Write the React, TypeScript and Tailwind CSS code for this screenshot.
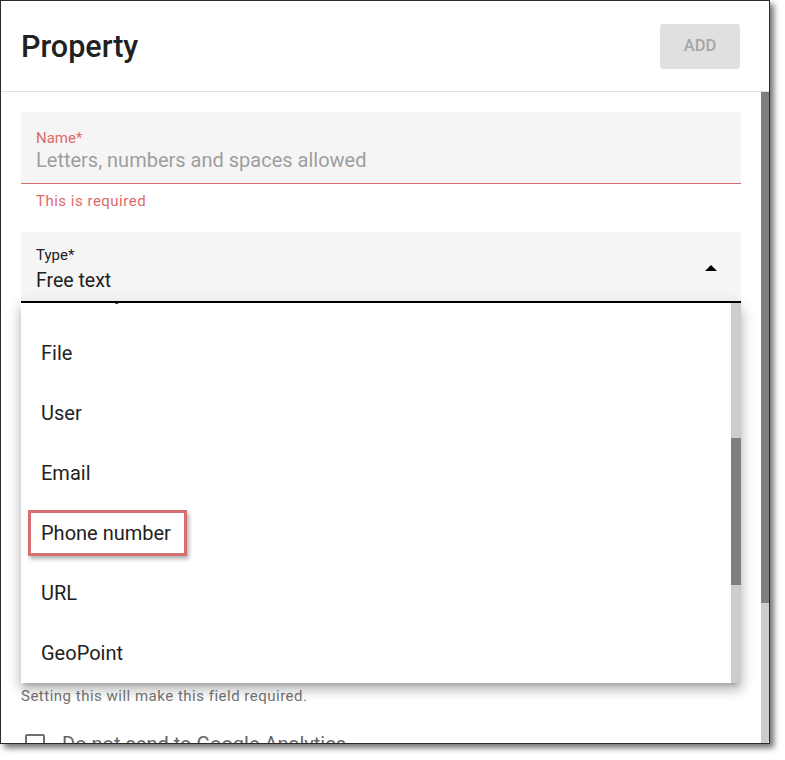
const options = ['Date only', 'File', 'User', 'Email', 'Phone number', 'URL', 'GeoPoint']

function MenuItem({ label }: { label: string }) {
  const marked = label === 'Phone number'
  return (
    <div className="flex h-[60px] items-center pl-[20px] text-[20px] text-[#222]">
      {marked ? (
        <span className="-ml-[13px] flex h-[46px] items-center border-[3px] border-[#d57070] pl-[10px] pr-[13px] shadow-[2px_3px_4px_rgba(0,0,0,0.3)]">
          {label}
        </span>
      ) : (
        label
      )}
    </div>
  )
}

export default function App() {
  return (
    <div className="relative h-[760px] w-[785px] bg-white font-['Roboto',sans-serif]">
      <div className="flex h-[744px] w-[770px] flex-col overflow-hidden border border-[#2b2b2b] bg-white shadow-[4px_4px_6px_rgba(0,0,0,0.55)]">
        {/* header */}
        <div className="flex h-[91px] shrink-0 items-center justify-between border-b border-[#e0e0e0] pl-5 pr-[29px]">
          <div className="mt-[1px] text-[30.5px] font-medium text-[#212121]">Property</div>
          <button className="mt-[1px] h-[45px] w-[80px] rounded-[3px] bg-[#e0e0e0] text-[16.5px] font-medium text-[#a6a6a6]">
            ADD
          </button>
        </div>

        {/* body */}
        <div className="flex min-h-0 flex-1">
          <div className="relative flex-1 px-5 pt-5">
            <div className="h-[72px] rounded-t-[4px] border-b border-[#d6696c] bg-[#f5f5f5] pl-[15px] pt-[17px]">
              <div className="text-[15px] leading-[18px] text-[#dc6a6c]">Name*</div>
              <div className="mt-[1px] text-[20px] leading-[24px] text-[#9e9e9e]">
                Letters, numbers and spaces allowed
              </div>
            </div>
            <div className="mt-[7px] pl-[15px] text-[15px] leading-[20px] tracking-[0.5px] text-[#dc6a6c]">
              This is required
            </div>

            <div className="mt-[21px] flex h-[71px] items-center rounded-t-[4px] border-b-2 border-black bg-[#f5f5f5] pl-[15px] pr-[24px]">
              <div className="flex-1 pt-[6px]">
                <div className="text-[15px] leading-[18px] text-[#222]">Type*</div>
                <div className="mt-[5px] text-[19.5px] leading-[24px] text-[#222]">Free text</div>
              </div>
              <svg width="12" height="6" viewBox="0 0 12 6" className="mt-[3px]">
                <polygon points="0,6 6,0 12,6" fill="#000" />
              </svg>
            </div>

            <div className="h-[383px]" />

            <div className="text-[15px] leading-[20px] tracking-[0.5px] text-[#757575]">
              Setting this will make this field required.
            </div>
            <div className="mt-[26px] flex items-center gap-[17px] pl-[4px]">
              <div className="h-[20px] w-[20px] rounded-[2px] border-2 border-[#6f6f6f]" />
              <div className="text-[20px] leading-[24px] text-[#666]">Do not send to Google Analytics</div>
            </div>

            {/* open select menu */}
            <div className="absolute left-5 right-5 top-[211px] flex h-[380px] overflow-hidden bg-white shadow-[0px_5px_5px_-3px_rgba(0,0,0,0.2),0px_8px_10px_1px_rgba(0,0,0,0.14),0px_3px_14px_2px_rgba(0,0,0,0.12)]">
              <div className="flex-1 overflow-hidden">
                <div className="-mt-[40px]">
                  {options.map((o) => (
                    <MenuItem key={o} label={o} />
                  ))}
                </div>
              </div>
              <div className="flex w-[10px] flex-col bg-[#cdcdcd]">
                <div className="h-[135px]" />
                <div className="h-[147px] bg-[#808080]" />
              </div>
            </div>
          </div>

          {/* outer scrollbar */}
          <div className="flex w-[8px] flex-col overflow-hidden rounded-br-[3px] bg-[#cdcdcd]">
            <div className="h-[511px] bg-[#7e7e7e]" />
          </div>
        </div>
      </div>
    </div>
  )
}
